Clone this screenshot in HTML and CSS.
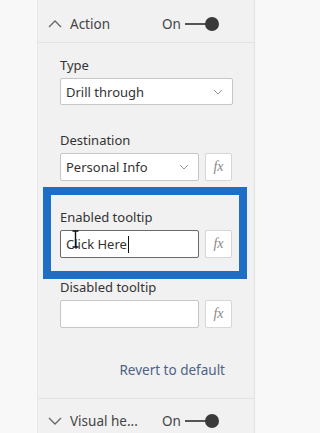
FILE: index.html
```html
<!DOCTYPE html>
<html lang="en">
<head>
  <meta charset="UTF-8" />
  <title>Format pane - Action</title>
  <link rel="stylesheet" href="styles.css">
</head>
<body>

<div class="pane">
  <div class="card-header">
    <svg class="caret" width="14" height="9" viewBox="0 0 14 9"><path d="M1 8 L7 2 L13 8" fill="none" stroke="#666" stroke-width="1.3"/></svg>
    <span class="card-title">Action</span>
    <span class="toggle-label">On</span>
    <span class="toggle"><span class="toggle-line"></span><span class="toggle-knob"></span></span>
  </div>

  <div class="card-body">
    <div class="field">
      <div class="field-label">Type</div>
      <div class="select wide">
        <span>Drill through</span>
        <svg class="select-caret" width="10" height="6" viewBox="0 0 10 6"><path d="M1 1 L5 5 L9 1" fill="none" stroke="#999" stroke-width="1"/></svg>
      </div>
    </div>

    <div class="field">
      <div class="field-label">Destination</div>
      <div class="field-row">
        <div class="select">
          <span>Personal Info</span>
          <svg class="select-caret" width="10" height="6" viewBox="0 0 10 6"><path d="M1 1 L5 5 L9 1" fill="none" stroke="#999" stroke-width="1"/></svg>
        </div>
        <button class="fx">fx</button>
      </div>
    </div>

    <div class="highlight">
      <div class="field-label">Enabled tooltip</div>
      <div class="field-row">
        <div class="text-input active">
          <span>Click Here</span><span class="caret-bar"></span>
          <svg class="ibeam" width="7" height="18" viewBox="0 0 7 18"><path d="M0.5 1 H6.5 M3.5 1 V17 M0.5 17 H6.5" fill="none" stroke="#111" stroke-width="1.4"/></svg>
        </div>
        <button class="fx">fx</button>
      </div>
    </div>

    <div class="field disabled-field">
      <div class="field-label">Disabled tooltip</div>
      <div class="field-row">
        <div class="text-input"></div>
        <button class="fx">fx</button>
      </div>
    </div>

    <div class="revert">Revert to default</div>
  </div>

  <div class="card-header bottom">
    <svg class="caret" width="14" height="9" viewBox="0 0 14 9"><path d="M1 1 L7 7 L13 1" fill="none" stroke="#666" stroke-width="1.3"/></svg>
    <span class="card-title">Visual he...</span>
    <span class="toggle-label">On</span>
    <span class="toggle"><span class="toggle-line"></span><span class="toggle-knob"></span></span>
  </div>
</div>

</body>
</html>
```

FILE: styles.css
```css
body {
  margin: 0;
  background: #f8f8f8;
  font-family: "Noto Sans", "Open Sans", sans-serif;
  font-size: 13px;
  color: #333;
  height: 433px;
  overflow: hidden;
}

.pane {
  margin-left: 37px;
  width: 216px;
  height: 433px;
  background: #f1f1f1;
  border-left: 1px solid #e6e6e6;
  border-right: 1px solid #e2e2e2;
}

.card-header {
  display: flex;
  align-items: center;
  height: 43px;
  padding: 5px 0 0 10px;
  box-sizing: border-box;
  border-bottom: 1px solid #e2e2e2;
}

.card-header.bottom {
  border-bottom: none;
  border-top: 1px solid #e2e2e2;
  padding-top: 2px;
}

.caret { margin-right: 8px; }

.card-title {
  width: 92px;
  color: #444;
  font-size: 13.5px;
}

.toggle-label {
  color: #444;
  font-size: 13.5px;
  margin-right: 4px;
}

.toggle {
  display: flex;
  align-items: center;
}

.toggle-line {
  width: 22px;
  height: 2px;
  background: #555;
}

.toggle-knob {
  width: 14px;
  height: 14px;
  border-radius: 50%;
  background: #3a3a3a;
  margin-left: -2px;
}

.card-body {
  padding: 13px 0 0 0;
  height: 355px;
  box-sizing: border-box;
}

.field { padding-left: 22px; margin-bottom: 26px; }
.disabled-field { margin-top: -1px; }

.field-label {
  line-height: 19px;
  margin-bottom: 3px;
  color: #333;
}

.field-row {
  display: flex;
  gap: 6px;
}

.select, .text-input {
  box-sizing: border-box;
  width: 139px;
  height: 28px;
  background: #fff;
  border: 1px solid #c6c6c6;
  border-radius: 2px;
  display: flex;
  align-items: center;
  padding-left: 5px;
  position: relative;
}

.select.wide { width: 173px; height: 27px; }

.select span, .text-input span { color: #333; }

.select-caret {
  margin-left: auto;
  margin-right: 9px;
}

.text-input.active { border-color: #6a6a6a; }

.caret-bar {
  width: 1px;
  height: 17px;
  background: #111;
  margin-left: 1px;
}

.ibeam {
  position: absolute;
  left: 11px;
  top: -1px;
}

.fx {
  box-sizing: border-box;
  width: 27px;
  height: 28px;
  background: #fff;
  border: 1px solid #d6d6d6;
  border-radius: 2px;
  padding: 0;
  font-family: "Liberation Serif", serif;
  font-style: italic;
  font-size: 14px;
  color: #888;
}

.highlight {
  margin: -20px 0 0 5px;
  width: 204px;
  box-sizing: border-box;
  border: 8px solid #1e6ec6;
  padding: 13px 0 13px 9px;
}

.revert {
  text-align: right;
  padding-right: 29px;
  margin-top: 33px;
  color: #4d6384;
  font-size: 13.5px;
}
```
